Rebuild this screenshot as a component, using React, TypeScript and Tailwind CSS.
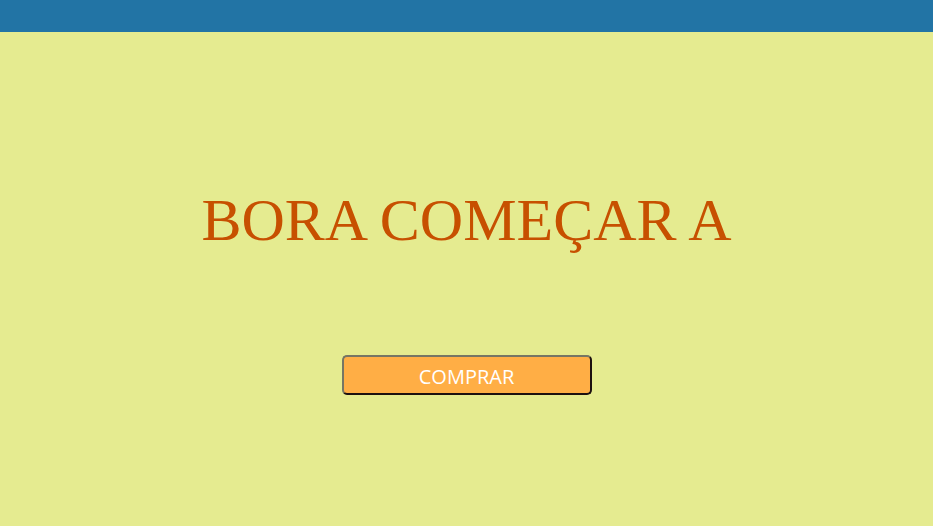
export default function App() {
  return (
    <div className="flex min-h-screen flex-col bg-[#e5eb90]">
      <header className="h-8 bg-[#2274a5]" />
      <main className="flex flex-1 flex-col items-center pt-36">
        <h1 className="font-['Liberation_Serif',serif] text-[60px] leading-[88px] text-[#c75000]">
          BORA COMEÇAR A
        </h1>
        <button
          type="button"
          className="mt-[91px] h-10 w-[250px] rounded-[5px] border-2 border-t-[#767664] border-r-[#1c1010] border-b-[#1c1010] border-l-[#767664] bg-[#ffae45] pt-1 font-['Open_Sans',sans-serif] text-xl leading-8 text-white"
        >
          COMPRAR
        </button>
      </main>
    </div>
  );
}
